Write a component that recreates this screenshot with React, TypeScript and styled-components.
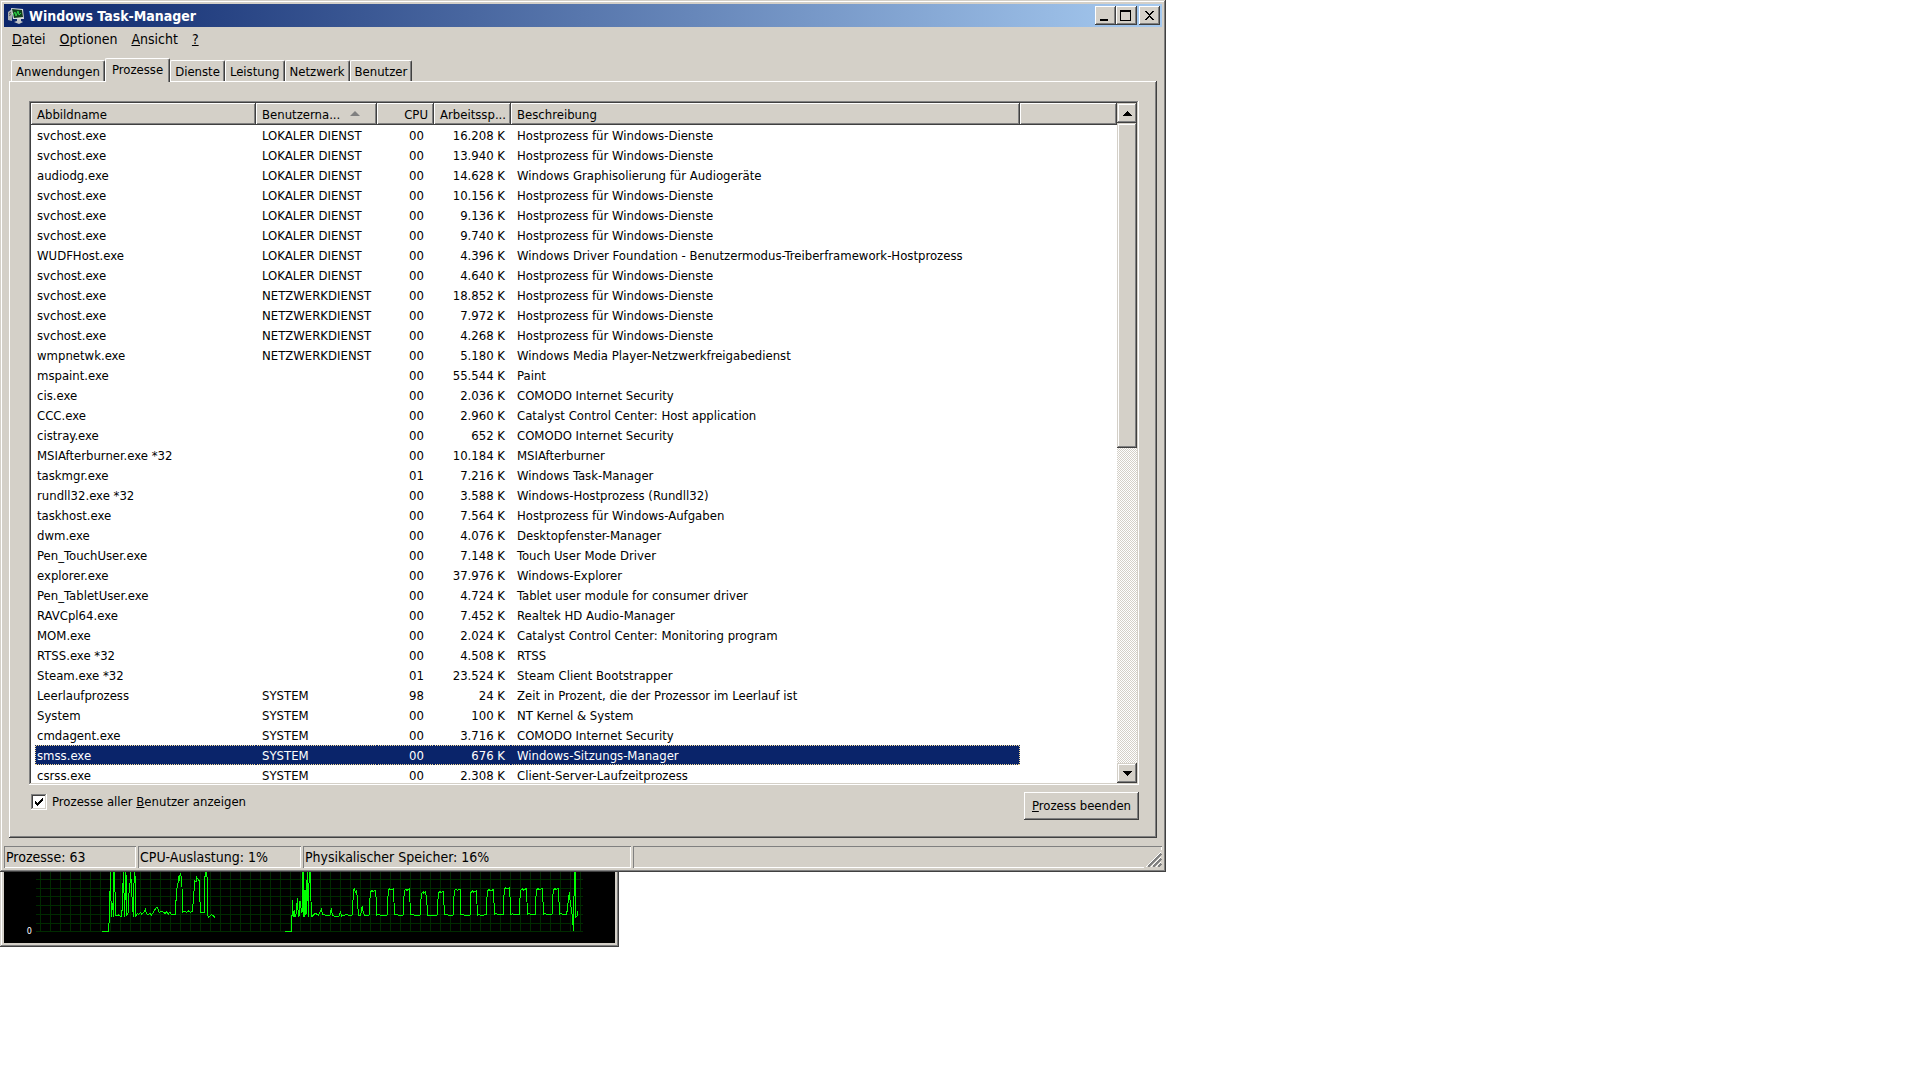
import React, { useState } from "react";
import styled, { createGlobalStyle, css } from "styled-components";

const FACE = "#d4d0c8";
const SHADOW = "#808080";
const DARK = "#404040";
const NAVY = "#0a246a";
const FOCUS = "#f5db95";
const UI_FONT = '"DejaVu Sans Condensed", "Noto Sans", sans-serif';

const raised = css`
  box-shadow: inset -1px -1px ${DARK}, inset 1px 1px #fff, inset -2px -2px ${SHADOW};
`;

const GlobalStyle = createGlobalStyle`
  *, *::before, *::after { box-sizing: border-box; }
  body { margin: 0; background: #fff; color: #000; }
  body, button, input, table { font-family: ${UI_FONT}; font-size: 13px; line-height: 16px; }
  button { margin: 0; border: 0; padding: 0; background: none; color: inherit; white-space: nowrap; }
`;

const Desktop = styled.main`
  display: flex;
  flex-direction: column;
  align-items: flex-start;
`;

const Window = styled.section`
  width: 1166px;
  max-width: 100%;
  padding: 4px;
  background: ${FACE};
  box-shadow: inset -1px -1px ${DARK}, inset 1px 1px ${FACE}, inset -2px -2px ${SHADOW}, inset 2px 2px #fff;
`;

const TitleBar = styled.header`
  display: flex;
  align-items: center;
  gap: 5px;
  height: 23px;
  padding: 0 2px 0 4px;
  background: linear-gradient(to right, ${NAVY}, #a6caf0);
  color: #fff;
`;

const Title = styled.h1`
  flex: 1;
  margin: 0;
  font-size: 14px;
  line-height: 20px;
`;

const CaptionButtons = styled.div`
  display: flex;
`;

const CaptionButton = styled.button<{ $apart?: boolean }>`
  display: grid;
  place-items: center;
  width: 21px;
  height: 19px;
  margin-left: ${(p) => (p.$apart ? "2px" : "0")};
  background: ${FACE};
  ${raised}
`;

const MenuBar = styled.nav`
  display: flex;
  gap: 14px;
  padding: 2px 8px;
`;

const MenuItem = styled.button`
  font-size: 14px;
  line-height: 20px;
`;

const TabStrip = styled.div`
  display: flex;
  align-items: flex-end;
  height: 30px;
  padding: 0 7px;
`;

const Tab = styled.button<{ $active: boolean }>`
  position: relative;
  height: ${(p) => (p.$active ? "24px" : "21px")};
  margin-bottom: ${(p) => (p.$active ? "-1px" : "0")};
  padding: ${(p) => (p.$active ? "0 6px 2px" : "2px 4px 0")};
  border-top: 1px solid #fff;
  border-left: 1px solid #fff;
  border-right: 1px solid ${DARK};
  border-radius: 2px 2px 0 0;
  background: ${FACE};
  box-shadow: inset -1px 0 ${SHADOW};
  z-index: ${(p) => (p.$active ? 1 : 0)};
`;

const TabPanel = styled.section`
  margin: 0 5px 8px;
  padding: 20px 18px 18px 20px;
  box-shadow: inset -1px -1px ${DARK}, inset 1px 1px #fff, inset -2px -2px ${SHADOW};
`;

const ListFrame = styled.div`
  display: flex;
  height: 684px;
  padding: 2px;
  background: #fff;
  box-shadow: inset -1px -1px #fff, inset 1px 1px ${SHADOW}, inset -2px -2px ${FACE}, inset 2px 2px ${DARK};
`;

const ListView = styled.div`
  flex: 1;
  overflow: hidden;
`;

const Table = styled.table`
  width: 100%;
  table-layout: fixed;
  border-collapse: separate;
  border-spacing: 0;
  white-space: nowrap;
`;

const Col = styled.col<{ $width?: number }>`
  width: ${(p) => (p.$width ? `${p.$width}px` : "auto")};
`;

const HeadCell = styled.th<{ $right?: boolean }>`
  height: 22px;
  padding: 2px 6px 0;
  background: ${FACE};
  font-weight: normal;
  text-align: ${(p) => (p.$right ? "right" : "left")};
  ${raised}
`;

const SortArrow = styled.svg`
  margin: 0 0 3px 10px;
`;

const Cell = styled.td<{ $right?: number }>`
  height: 20px;
  padding: 2px ${(p) => p.$right ?? 6}px 0 6px;
  text-align: ${(p) => (p.$right ? "right" : "left")};
`;

const dotsAcross = `repeating-linear-gradient(to right, ${NAVY} 0 1px, ${FOCUS} 1px 2px)`;
const dotsDown = `repeating-linear-gradient(${NAVY} 0 1px, ${FOCUS} 1px 2px)`;
const navyFill = `linear-gradient(${NAVY}, ${NAVY})`;

const Row = styled.tr<{ $selected: boolean }>`
  ${(p) =>
    p.$selected &&
    css`
      color: #fff;
      ${Cell}:not(:last-child) {
        background: ${dotsAcross} 0 0 / 100% 1px no-repeat, ${dotsAcross} 0 100% / 100% 1px no-repeat, ${NAVY};
      }
      ${Cell}:first-child:not(:last-child) {
        background: ${dotsDown} 4px 0 / 1px 100% no-repeat, ${dotsAcross} 4px 0 / 100% 1px no-repeat,
          ${dotsAcross} 4px 100% / 100% 1px no-repeat, ${navyFill} 4px 0 no-repeat;
      }
      ${Cell}:nth-last-child(2) {
        background: ${dotsDown} 100% 0 / 1px 100% no-repeat, ${dotsAcross} 0 0 / 100% 1px no-repeat,
          ${dotsAcross} 0 100% / 100% 1px no-repeat, ${NAVY};
      }
    `}
`;

const ScrollBar = styled.div`
  display: flex;
  flex-direction: column;
  width: 20px;
  background: repeating-conic-gradient(#fff 0 25%, ${FACE} 0 50%) 0 0 / 2px 2px;
`;

const scrollPart = css`
  background: ${FACE};
  box-shadow: inset -1px -1px ${DARK}, inset 1px 1px ${FACE}, inset -2px -2px ${SHADOW}, inset 2px 2px #fff;
`;

const ScrollButton = styled.button`
  display: grid;
  place-items: center;
  height: 20px;
  ${scrollPart}
`;

const ScrollThumb = styled.div`
  height: 325px;
  margin-bottom: auto;
  ${scrollPart}
`;

const PanelFooter = styled.footer`
  display: flex;
  justify-content: space-between;
  align-items: flex-start;
  padding: 7px 0 0 2px;
`;

const CheckLabel = styled.label`
  display: flex;
  align-items: center;
  gap: 5px;
  padding-top: 2px;
`;

const CheckMark = styled.svg`
  grid-area: 1 / 1;
  pointer-events: none;
`;

const CheckBox = styled.span`
  display: grid;
  place-items: center;
`;

const CheckInput = styled.input`
  grid-area: 1 / 1;
  appearance: none;
  width: 16px;
  height: 16px;
  margin: 0;
  background: #fff;
  box-shadow: inset -1px -1px #fff, inset 1px 1px ${SHADOW}, inset -2px -2px ${FACE}, inset 2px 2px ${DARK};
  &:not(:checked) + ${CheckMark} { visibility: hidden; }
`;

const PushButton = styled.button`
  height: 28px;
  padding: 0 8px;
  ${raised}
`;

const StatusBar = styled.footer`
  display: grid;
  grid-template-columns: 132px 163px 328px 1fr;
  gap: 2px;
`;

const StatusCell = styled.div`
  display: flex;
  justify-content: flex-end;
  height: 22px;
  padding-left: 2px;
  box-shadow: inset 1px 1px ${SHADOW}, inset -1px -1px #fff;
`;

const StatusText = styled.span`
  flex: 1;
  font-size: 14px;
  line-height: 22px;
  white-space: nowrap;
`;

const Grip = styled.svg`
  align-self: flex-end;
  background: ${FACE};
`;

const MonitorWindow = styled.section`
  width: 619px;
  max-width: 100%;
  padding: 0 4px 4px;
  background: ${FACE};
  box-shadow: inset -1px -1px ${DARK}, inset 1px 0 ${FACE}, inset -2px -2px ${SHADOW}, inset 2px 0 #fff;
`;

const Monitor = styled.svg`
  display: block;
  width: 100%;
  background: #000;
`;

const HOST = "Hostprozess für Windows-Dienste";
const LOCAL = "LOKALER DIENST";
const NET = "NETZWERKDIENST";

const processes: string[][] = [
  ["svchost.exe", LOCAL, "00", "16.208 K", HOST],
  ["svchost.exe", LOCAL, "00", "13.940 K", HOST],
  ["audiodg.exe", LOCAL, "00", "14.628 K", "Windows Graphisolierung für Audiogeräte"],
  ["svchost.exe", LOCAL, "00", "10.156 K", HOST],
  ["svchost.exe", LOCAL, "00", "9.136 K", HOST],
  ["svchost.exe", LOCAL, "00", "9.740 K", HOST],
  ["WUDFHost.exe", LOCAL, "00", "4.396 K", "Windows Driver Foundation - Benutzermodus-Treiberframework-Hostprozess"],
  ["svchost.exe", LOCAL, "00", "4.640 K", HOST],
  ["svchost.exe", NET, "00", "18.852 K", HOST],
  ["svchost.exe", NET, "00", "7.972 K", HOST],
  ["svchost.exe", NET, "00", "4.268 K", HOST],
  ["wmpnetwk.exe", NET, "00", "5.180 K", "Windows Media Player-Netzwerkfreigabedienst"],
  ["mspaint.exe", "", "00", "55.544 K", "Paint"],
  ["cis.exe", "", "00", "2.036 K", "COMODO Internet Security"],
  ["CCC.exe", "", "00", "2.960 K", "Catalyst Control Center: Host application"],
  ["cistray.exe", "", "00", "652 K", "COMODO Internet Security"],
  ["MSIAfterburner.exe *32", "", "00", "10.184 K", "MSIAfterburner"],
  ["taskmgr.exe", "", "01", "7.216 K", "Windows Task-Manager"],
  ["rundll32.exe *32", "", "00", "3.588 K", "Windows-Hostprozess (Rundll32)"],
  ["taskhost.exe", "", "00", "7.564 K", "Hostprozess für Windows-Aufgaben"],
  ["dwm.exe", "", "00", "4.076 K", "Desktopfenster-Manager"],
  ["Pen_TouchUser.exe", "", "00", "7.148 K", "Touch User Mode Driver"],
  ["explorer.exe", "", "00", "37.976 K", "Windows-Explorer"],
  ["Pen_TabletUser.exe", "", "00", "4.724 K", "Tablet user module for consumer driver"],
  ["RAVCpl64.exe", "", "00", "7.452 K", "Realtek HD Audio-Manager"],
  ["MOM.exe", "", "00", "2.024 K", "Catalyst Control Center: Monitoring program"],
  ["RTSS.exe *32", "", "00", "4.508 K", "RTSS"],
  ["Steam.exe *32", "", "01", "23.524 K", "Steam Client Bootstrapper"],
  ["Leerlaufprozess", "SYSTEM", "98", "24 K", "Zeit in Prozent, die der Prozessor im Leerlauf ist"],
  ["System", "SYSTEM", "00", "100 K", "NT Kernel & System"],
  ["cmdagent.exe", "SYSTEM", "00", "3.716 K", "COMODO Internet Security"],
  ["smss.exe", "SYSTEM", "00", "676 K", "Windows-Sitzungs-Manager"],
  ["csrss.exe", "SYSTEM", "00", "2.308 K", "Client-Server-Laufzeitprozess"],
];

const tabs = ["Anwendungen", "Prozesse", "Dienste", "Leistung", "Netzwerk", "Benutzer"];

// Load curves, three units per pixel
const firstRun =
  "306,214 325,214 325,190 328,188 328,95 331,95 331,20 334,172 338,130 341,172 341,20 344,20 346,165 352,168 356,165 362,170 365,168 368,120 370,20 374,172 377,20 380,90 380,165 384,160 387,100 391,60 391,20 396,110 400,172 403,20 406,60 407,168 412,160 416,164 421,157 426,163 431,157 434,155 436,144 439,160 445,164 450,160 454,165 460,158 464,150 469,142 473,142 477,157 484,154 490,157 495,160 500,155 505,162 510,156 514,163 526,163 526,120 529,120 530,85 533,80 536,48 538,62 541,38 544,52 546,80 547,158 552,154 560,157 566,153 572,157 578,154 581,95 584,90 584,62 588,65 590,52 594,58 598,62 600,125 602,157 613,157 614,60 617,30 620,40 622,60 623,165 626,172 634,163 640,168 645,173";

const secondRunStart =
  "855,214 874,214 874,165 877,165 877,120 880,170 884,150 885,172 889,158 892,114 894,150 897,170 900,122 903,145 906,160 908,20 911,60 912,172 915,90 918,165 921,60 922,20 925,172 928,20 931,20 932,100 935,170 938,168 946,160 955,165 964,148 968,163 975,165 985,168 990,165 994,145 997,166 1003,168 1017,168 1021,156 1025,168 1040,164 1050,167 1057,165 1060,100 1063,83 1066,97 1069,94 1072,110 1075,165 1082,165 1087,137 1090,160 1095,166";

const secondRunEnd =
  "1700,163 1704,130 1708,97 1711,130 1715,150 1718,185 1721,214 1721,155 1724,20 1727,70 1728,170 1731,168 1734,153";

// [rise, top start, top end, fall, top, base]
const pulses = [
  [1108, 1111, 1127, 1130, 91, 165],
  [1162, 1165, 1180, 1183, 86, 165],
  [1210, 1213, 1228, 1231, 87, 165],
  [1260, 1265, 1277, 1282, 95, 167],
  [1312, 1315, 1331, 1333, 94, 165],
  [1360, 1363, 1380, 1383, 87, 165],
  [1410, 1413, 1429, 1432, 93, 166],
  [1459, 1462, 1480, 1483, 89, 163],
  [1510, 1513, 1528, 1532, 83, 163],
  [1558, 1562, 1579, 1582, 86, 163],
  [1606, 1609, 1627, 1630, 85, 163],
  [1656, 1660, 1675, 1678, 85, 163],
];

const pulsePoints = pulses
  .map(
    ([a, b, c, d, top, base]) =>
      `${a},${base} ${a + 1},${top + 40} ${b},${top + 5} ${b + 5},${top} ${(b + c) / 2},${top + 4} ${c},${top} ${d - 1},${top + 40} ${d},${base} ${d + 6},${base - 2} ${d + 12},${base + 1}`,
  )
  .join(" ");

const gridX = Array.from({ length: 55 }, (_, i) => 121.5 + i * 30);
const gridY = [58, 85, 109, 136, 163, 190, 214];

function TaskManagerIcon() {
  return (
    <svg width="16" height="16" viewBox="0 0 16 16" aria-hidden="true">
      <path d="M0 4 4 1v12l-4-1z" fill="#a9adb0" />
      <path d="M1 5l2-1v1L1 6zM1 7l2-1v1L1 8z" fill="#555" />
      <path d="M3 0 15 1l1 10-11 0z" fill="#d9dcdd" />
      <path d="M4 1 14 2l1 7-9 1z" fill="#12401c" />
      <path d="M5 7l2-3 1 4 2-5 1 4 2-2" fill="none" stroke="#2fd348" strokeWidth="1" />
      <path d="M9 11h4l0 2 2 1-4 2-5-2 3-1z" fill="#c3c6c8" />
    </svg>
  );
}

function MonitorGraph() {
  return (
    <Monitor viewBox="12 36 1833 213" role="img" aria-label="CPU">
      <g stroke="#002b00" strokeWidth="3" shapeRendering="crispEdges">
        {gridX.map((x) => (
          <line key={x} x1={x} x2={x} y1="36" y2="214" />
        ))}
        {gridY.map((y) => (
          <line key={y} x1="108" x2="1749" y1={y + 0.5} y2={y + 0.5} />
        ))}
      </g>
      <g fill="none" stroke="#00ff00" strokeWidth="3" shapeRendering="crispEdges">
        <polyline points={firstRun} />
        <polyline points={`${secondRunStart} ${pulsePoints} ${secondRunEnd}`} />
      </g>
      <text x="80" y="221" fill="#fff" fontSize="27" fontFamily="DejaVu Sans Condensed, sans-serif">
        0
      </text>
    </Monitor>
  );
}

export default function App() {
  const [active, setActive] = useState("Prozesse");
  const [selected, setSelected] = useState(31);

  return (
    <Desktop>
      <GlobalStyle />
      <Window>
        <TitleBar>
          <TaskManagerIcon />
          <Title>Windows Task-Manager</Title>
          <CaptionButtons>
            <CaptionButton aria-label="Minimieren">
              <svg width="13" height="11" viewBox="0 0 13 11"><path d="M1 9h8v2H1z" /></svg>
            </CaptionButton>
            <CaptionButton aria-label="Maximieren">
              <svg width="13" height="11" viewBox="0 0 13 11" shapeRendering="crispEdges">
                <path d="M0 0h11v11H0zM1 2v8h9V2z" fillRule="evenodd" />
              </svg>
            </CaptionButton>
            <CaptionButton $apart aria-label="Schließen">
              <svg width="9" height="9" viewBox="0 0 9 9" shapeRendering="crispEdges">
                <path d="M0 0h2v1h1v1h1v1h1V2h1V1h1V0h2v1H8v1H7v1H6v1H5v1h1v1h1v1h1v1h1v1H7V8H6V7H5V6H4v1H3v1H2v1H0V8h1V7h1V6h1V5h1V4H3V3H2V2H1V1H0z" />
              </svg>
            </CaptionButton>
          </CaptionButtons>
        </TitleBar>
        <MenuBar>
          <MenuItem><u>D</u>atei</MenuItem>
          <MenuItem><u>O</u>ptionen</MenuItem>
          <MenuItem><u>A</u>nsicht</MenuItem>
          <MenuItem><u>?</u></MenuItem>
        </MenuBar>
        <TabStrip role="tablist">
          {tabs.map((tab) => (
            <Tab key={tab} role="tab" aria-selected={tab === active} $active={tab === active} onClick={() => setActive(tab)}>
              {tab}
            </Tab>
          ))}
        </TabStrip>
        <TabPanel role="tabpanel">
          <ListFrame>
            <ListView>
              <Table>
                <colgroup>
                  <Col $width={225} />
                  <Col $width={121} />
                  <Col $width={57} />
                  <Col $width={77} />
                  <Col $width={509} />
                  <Col />
                </colgroup>
                <thead>
                  <tr>
                    <HeadCell>Abbildname</HeadCell>
                    <HeadCell>
                      Benutzerna...
                      <SortArrow width="10" height="5" viewBox="0 0 10 5"><path d="M0 5 5 0l5 5z" fill={SHADOW} /></SortArrow>
                    </HeadCell>
                    <HeadCell $right>CPU</HeadCell>
                    <HeadCell>Arbeitssp...</HeadCell>
                    <HeadCell>Beschreibung</HeadCell>
                    <HeadCell />
                  </tr>
                </thead>
                <tbody>
                  {processes.map(([name, user, cpu, memory, description], i) => (
                    <Row key={i} $selected={i === selected} onClick={() => setSelected(i)}>
                      <Cell>{name}</Cell>
                      <Cell>{user}</Cell>
                      <Cell $right={10}>{cpu}</Cell>
                      <Cell $right={6}>{memory}</Cell>
                      <Cell>{description}</Cell>
                      <Cell />
                    </Row>
                  ))}
                </tbody>
              </Table>
            </ListView>
            <ScrollBar>
              <ScrollButton aria-label="Nach oben">
                <svg width="9" height="5" viewBox="0 0 9 5" shapeRendering="crispEdges"><path d="M4 0h1v1h1v1h1v1h1v1h1v1H0V4h1V3h1V2h1V1h1z" /></svg>
              </ScrollButton>
              <ScrollThumb />
              <ScrollButton aria-label="Nach unten">
                <svg width="9" height="5" viewBox="0 0 9 5" shapeRendering="crispEdges"><path d="M0 0h9v1H8v1H7v1H6v1H5v1H4V4H3V3H2V2H1V1H0z" /></svg>
              </ScrollButton>
            </ScrollBar>
          </ListFrame>
          <PanelFooter>
            <CheckLabel>
              <CheckBox>
                <CheckInput type="checkbox" defaultChecked />
                <CheckMark width="8" height="8" viewBox="0 0 8 8" shapeRendering="crispEdges">
                  <path d="M7 0h1v3H7v1H6v1H5v1H4v1H3v1H2V7H1V6H0V3h1v1h1v1h1V4h1V3h1V2h1V1h1z" />
                </CheckMark>
              </CheckBox>
              <span>Prozesse aller <u>B</u>enutzer anzeigen</span>
            </CheckLabel>
            <PushButton><u>P</u>rozess beenden</PushButton>
          </PanelFooter>
        </TabPanel>
        <StatusBar>
          <StatusCell><StatusText>Prozesse: 63</StatusText></StatusCell>
          <StatusCell><StatusText>CPU-Auslastung: 1%</StatusText></StatusCell>
          <StatusCell><StatusText>Physikalischer Speicher: 16%</StatusText></StatusCell>
          <StatusCell>
            <Grip width="18" height="18" viewBox="0 0 18 18" shapeRendering="crispEdges">
              <path d="M2 17 17 2M7 17 17 7M12 17l5-5" stroke="#fff" strokeWidth="1" />
              <path d="M4 17 17 4M9 17l8-8M14 17l3-3" stroke={SHADOW} strokeWidth="2" />
            </Grip>
          </StatusCell>
        </StatusBar>
      </Window>
      <MonitorWindow>
        <MonitorGraph />
      </MonitorWindow>
    </Desktop>
  );
}
